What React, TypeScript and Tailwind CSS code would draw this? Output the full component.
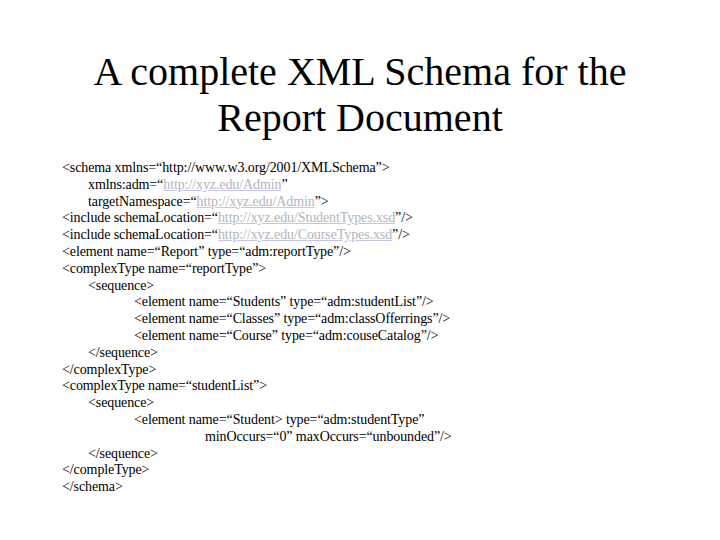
import React from "react";

const L = ({ children }: { children: React.ReactNode }) => (
  <span className="text-[#b4b4bc] underline decoration-[#c4c4ec]">{children}</span>
);

const Row = ({ indent = 0, children }: { indent?: number; children: React.ReactNode }) => {
  const pad = ["pl-0", "pl-[26px]", "pl-[72px]", "pl-[143px]"][indent];
  return <div className={`${pad} whitespace-pre`}>{children}</div>;
};

export default function App() {
  return (
    <div className="w-[720px] h-[540px] bg-white text-black font-['Liberation_Serif','Times_New_Roman',serif] overflow-hidden">
      <div className="pt-[49px] text-center text-[40px] leading-[46px]">
        <div>A complete XML Schema for the</div>
        <div>Report Document</div>
      </div>
      <div className="pl-[62px] pt-[19px] text-[14px] leading-[16.8px] tracking-[-0.1px]">
        <Row>&lt;schema xmlns=“http://www.w3.org/2001/XMLSchema”&gt;</Row>
        <Row indent={1}>xmlns:adm=“<L>http://xyz.edu/Admin</L>”</Row>
        <Row indent={1}>targetNamespace=“<L>http://xyz.edu/Admin</L>”&gt;</Row>
        <Row>&lt;include schemaLocation=“<L>http://xyz.edu/StudentTypes.xsd</L>”/&gt;</Row>
        <Row>&lt;include schemaLocation=“<L>http://xyz.edu/CourseTypes.xsd</L>”/&gt;</Row>
        <Row>&lt;element name=“Report” type=“adm:reportType”/&gt;</Row>
        <Row>&lt;complexType name=“reportType”&gt;</Row>
        <Row indent={1}>&lt;sequence&gt;</Row>
        <Row indent={2}>&lt;element name=“Students” type=“adm:studentList”/&gt;</Row>
        <Row indent={2}>&lt;element name=“Classes” type=“adm:classOfferrings”/&gt;</Row>
        <Row indent={2}>&lt;element name=“Course” type=“adm:couseCatalog”/&gt;</Row>
        <Row indent={1}>&lt;/sequence&gt;</Row>
        <Row>&lt;/complexType&gt;</Row>
        <Row>&lt;complexType name=“studentList”&gt;</Row>
        <Row indent={1}>&lt;sequence&gt;</Row>
        <Row indent={2}>&lt;element name=“Student&gt; type=“adm:studentType”</Row>
        <Row indent={3}>minOccurs=“0” maxOccurs=“unbounded”/&gt;</Row>
        <Row indent={1}>&lt;/sequence&gt;</Row>
        <Row>&lt;/compleType&gt;</Row>
        <Row>&lt;/schema&gt;</Row>
      </div>
    </div>
  );
}
